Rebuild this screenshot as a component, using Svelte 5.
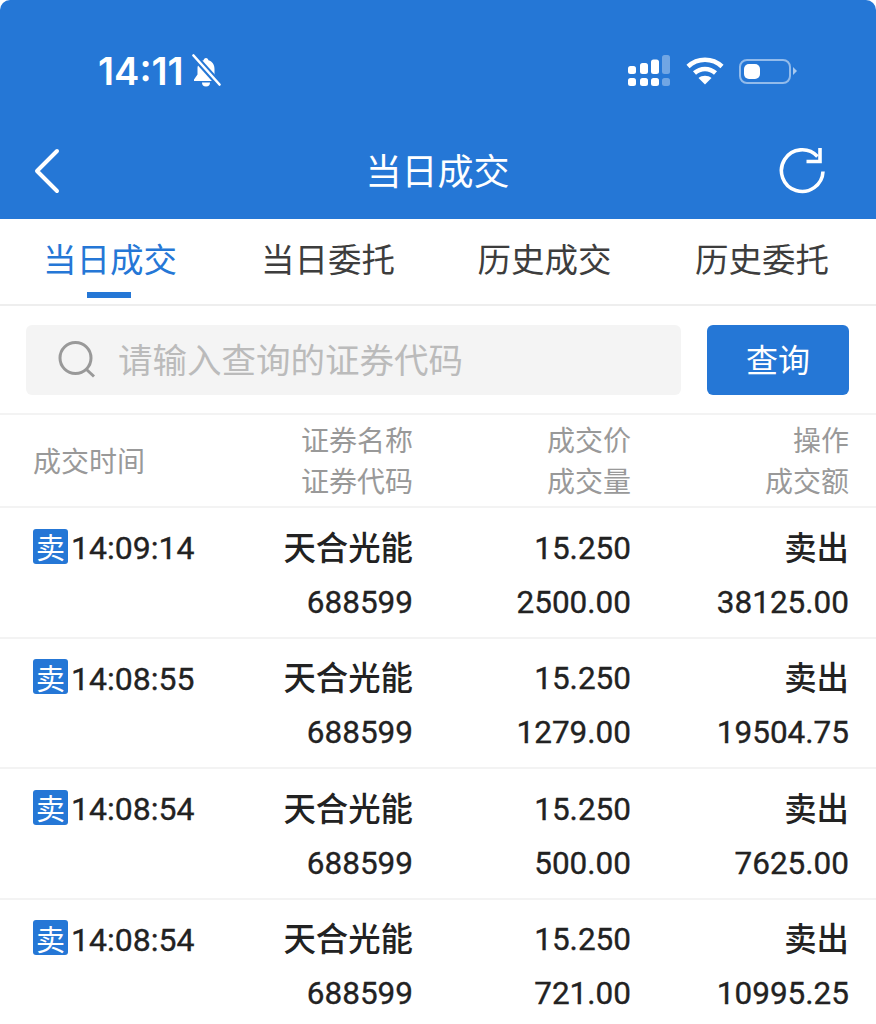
<script>
  const tabs = ["当日成交", "当日委托", "历史成交", "历史委托"];
  const rows = [
    { time: "14:09:14", price: "15.250", qty: "2500.00", amount: "38125.00" },
    { time: "14:08:55", price: "15.250", qty: "1279.00", amount: "19504.75" },
    { time: "14:08:54", price: "15.250", qty: "500.00", amount: "7625.00" },
    { time: "14:08:54", price: "15.250", qty: "721.00", amount: "10995.25" }
  ];
</script>

<div class="page">
  <header class="top">
    <div class="status">
      <div class="clock">
        <span>14:11</span>
        <svg width="32" height="34" viewBox="0 0 32 34" fill="none">
          <path d="M16 4c-1.400 0-2.300 1-2.400 2.300C9.500 7.500 7.500 11 7.500 15v5.500L4 25.500v1.500h24v-1.500l-3.500-5V15c0-4-2-7.500-6.100-8.700C18.300 5 17.400 4 16 4z" fill="#fff"/>
          <path d="M12 28.500a4 4 0 0 0 8 0z" fill="#fff"/>
          <path d="M3 1l26 29" stroke="#2577d6" stroke-width="6.500"/>
          <path d="M3.500 1.500l26 29" stroke="#fff" stroke-width="2.600" stroke-linecap="round"/>
        </svg>
      </div>
      <div class="indicators">
        <svg width="44" height="32" viewBox="0 0 44 32" fill="#fff">
          <rect x="1" y="11" width="8" height="8" rx="2.500"/>
          <rect x="13" y="8" width="8" height="11" rx="2.500"/>
          <rect x="24" y="4.500" width="8" height="14.500" rx="2.500"/>
          <rect x="35" y="0" width="8" height="19" rx="2.500" opacity=".35"/>
          <rect x="1" y="23" width="8" height="8" rx="2.500"/>
          <rect x="13" y="23" width="8" height="8" rx="2.500"/>
          <rect x="24" y="23" width="8" height="8" rx="2.500"/>
          <rect x="35" y="23" width="8" height="8" rx="2.500" opacity=".35"/>
        </svg>
        <svg width="38" height="28" viewBox="0 0 38 28" fill="none" stroke="#fff" stroke-width="4.500">
          <path d="M2 9.500C11.500 .500 26.500 .500 36 9.500"/>
          <path d="M8.500 16c6-5.500 15-5.500 21 0"/>
          <path d="M19 27.500l-6.500-6.500c3.500-3 9.500-3 13 0z" fill="#fff" stroke="none"/>
        </svg>
        <div class="battery"><div class="level"></div></div>
      </div>
    </div>
    <div class="nav">
      <svg class="back" width="30" height="46" viewBox="0 0 30 46" fill="none" stroke="#fff" stroke-width="4" stroke-linecap="round" stroke-linejoin="round">
        <path d="M26 3L6 23l20 20" />
      </svg>
      <h1>当日成交</h1>
      <svg class="refresh" width="48" height="48" viewBox="0 0 48 48" fill="none" stroke="#fff" stroke-width="3.600">
        <path d="M44 24.500A20.800 20.800 0 1 1 38.500 9.500"/>
        <path d="M41 1v13.500H27.500"/>
      </svg>
    </div>
  </header>

  <nav class="tabs">
    {#each tabs as tab, i}
      <div class="tab" class:active={i === 0}>{tab}</div>
    {/each}
  </nav>

  <div class="search-bar">
    <div class="search">
      <svg width="40" height="40" viewBox="0 0 40 40" fill="none" stroke="#999" stroke-width="3">
        <circle cx="18.500" cy="18" r="15.500"/>
        <path d="M29.500 29.500l7.500 7"/>
      </svg>
      <span>请输入查询的证券代码</span>
    </div>
    <button type="button"><span>查询</span></button>
  </div>

  <div class="row head">
    <div class="col time single">成交时间</div>
    <div class="col name"><span>证券名称</span><span>证券代码</span></div>
    <div class="col price"><span>成交价</span><span>成交量</span></div>
    <div class="col op"><span>操作</span><span>成交额</span></div>
  </div>

  {#each rows as row}
    <div class="row item">
      <div class="col time"><span class="line clock-time"><i>卖</i>{row.time}</span></div>
      <div class="col name"><span class="line cjk">天合光能</span><span class="line">688599</span></div>
      <div class="col price"><span class="line">{row.price}</span><span class="line">{row.qty}</span></div>
      <div class="col op"><span class="line cjk">卖出</span><span class="line">{row.amount}</span></div>
    </div>
  {/each}
</div>

<style>
  :global(body) {
    background: #fff;
  }

  .page {
    width: 876px;
    height: 1024px;
    overflow: hidden;
    background: #fff;
    font-family: Roboto, "Noto Sans CJK SC", sans-serif;
  }

  .top {
    height: 219px;
    background: #2577d6;
    border-radius: 10px 10px 0 0;
    color: #fff;
  }

  .status {
    display: flex;
    justify-content: space-between;
    align-items: center;
    height: 142px;
    padding: 0 78px 0 98px;
  }

  .clock {
    display: flex;
    align-items: center;
    gap: 6px;
    font-family: Inter, sans-serif;
    font-size: 38px;
    font-weight: 600;
  }

  .indicators {
    display: flex;
    align-items: center;
    gap: 15px;
  }

  .battery {
    position: relative;
    width: 52px;
    height: 25px;
    padding: 3px;
    box-sizing: border-box;
    margin-right: 7px;
    border: 2px solid rgba(255, 255, 255, .5);
    border-radius: 8px;
  }

  .battery::after {
    content: "";
    position: absolute;
    right: -8px;
    top: 6.500px;
    border-left: 4px solid rgba(255, 255, 255, .6);
    border-top: 4px solid transparent;
    border-bottom: 4px solid transparent;
  }

  .level {
    width: 16px;
    height: 15px;
    background: #fff;
    border-radius: 5px;
  }

  .nav {
    display: grid;
    grid-template-columns: 1fr auto 1fr;
    align-items: center;
    height: 58px;
    padding: 0 49px 0 31px;
  }

  .refresh {
    justify-self: end;
  }

  h1 {
    margin: 0;
    padding: 0 0 4px 17px;
    font-size: 36px;
    font-weight: 400;
  }

  .tabs {
    display: grid;
    grid-template-columns: 220px 216px 217px 218px;
    height: 85px;
    border-bottom: 2px solid #eee;
  }

  .tab {
    position: relative;
    padding-top: 20px;
    font-size: 33.500px;
    line-height: 44px;
    text-align: center;
    color: #3d3d3d;
  }

  .tab.active {
    color: #2577d6;
  }

  .tab.active::after {
    content: "";
    position: absolute;
    left: 87px;
    bottom: 6px;
    width: 44px;
    height: 6px;
    background: #2577d6;
  }

  .search-bar {
    display: flex;
    gap: 26px;
    height: 109px;
    padding: 19px 27px 0 26px;
    box-sizing: border-box;
    border-bottom: 2px solid #f3f3f3;
  }

  .search {
    display: flex;
    align-items: center;
    gap: 21px;
    width: 655px;
    height: 70px;
    padding-left: 31px;
    box-sizing: border-box;
    background: #f4f4f4;
    border-radius: 6px;
    color: #bbb;
    font-size: 34.500px;
  }

  .search span {
    padding-bottom: 4px;
  }

  button {
    width: 142px;
    height: 70px;
    padding: 0 0 4px;
    border: 0;
    border-radius: 6px;
    background: #2577d6;
    color: #fff;
    font-family: inherit;
    font-size: 32px;
  }

  .row {
    display: grid;
    grid-template-columns: 205px 175px 218px 218px;
    padding: 0 27px 0 33px;
    border-bottom: 2px solid #f3f3f3;
    box-sizing: border-box;
  }

  .col {
    display: flex;
    flex-direction: column;
    align-items: flex-end;
  }

  .col.time {
    align-items: flex-start;
  }

  .head {
    height: 93px;
    padding-top: 6px;
    color: #999;
    font-size: 28px;
    line-height: 41px;
  }

  .head .single {
    justify-content: center;
    padding-bottom: 3px;
    box-sizing: border-box;
  }

  .item {
    height: 130.500px;
    padding-top: 13px;
    color: #222;
    font-size: 31.500px;
    -webkit-text-stroke: .35px #222;
  }

  .line {
    display: flex;
    align-items: center;
    height: 54px;
    white-space: nowrap;
  }

  .clock-time {
    font-size: 32px;
  }

  .cjk {
    padding-bottom: 6px;
    box-sizing: border-box;
    font-size: 32.400px;
    font-weight: 500;
    -webkit-text-stroke: 0;
  }

  .line i {
    display: flex;
    align-items: center;
    justify-content: center;
    width: 35px;
    height: 35px;
    margin: -4px 3px 0 0;
    background: #2577d6;
    border-radius: 3px;
    color: #fff;
    font-style: normal;
    font-size: 29px;
    -webkit-text-stroke: 0;
  }
</style>
